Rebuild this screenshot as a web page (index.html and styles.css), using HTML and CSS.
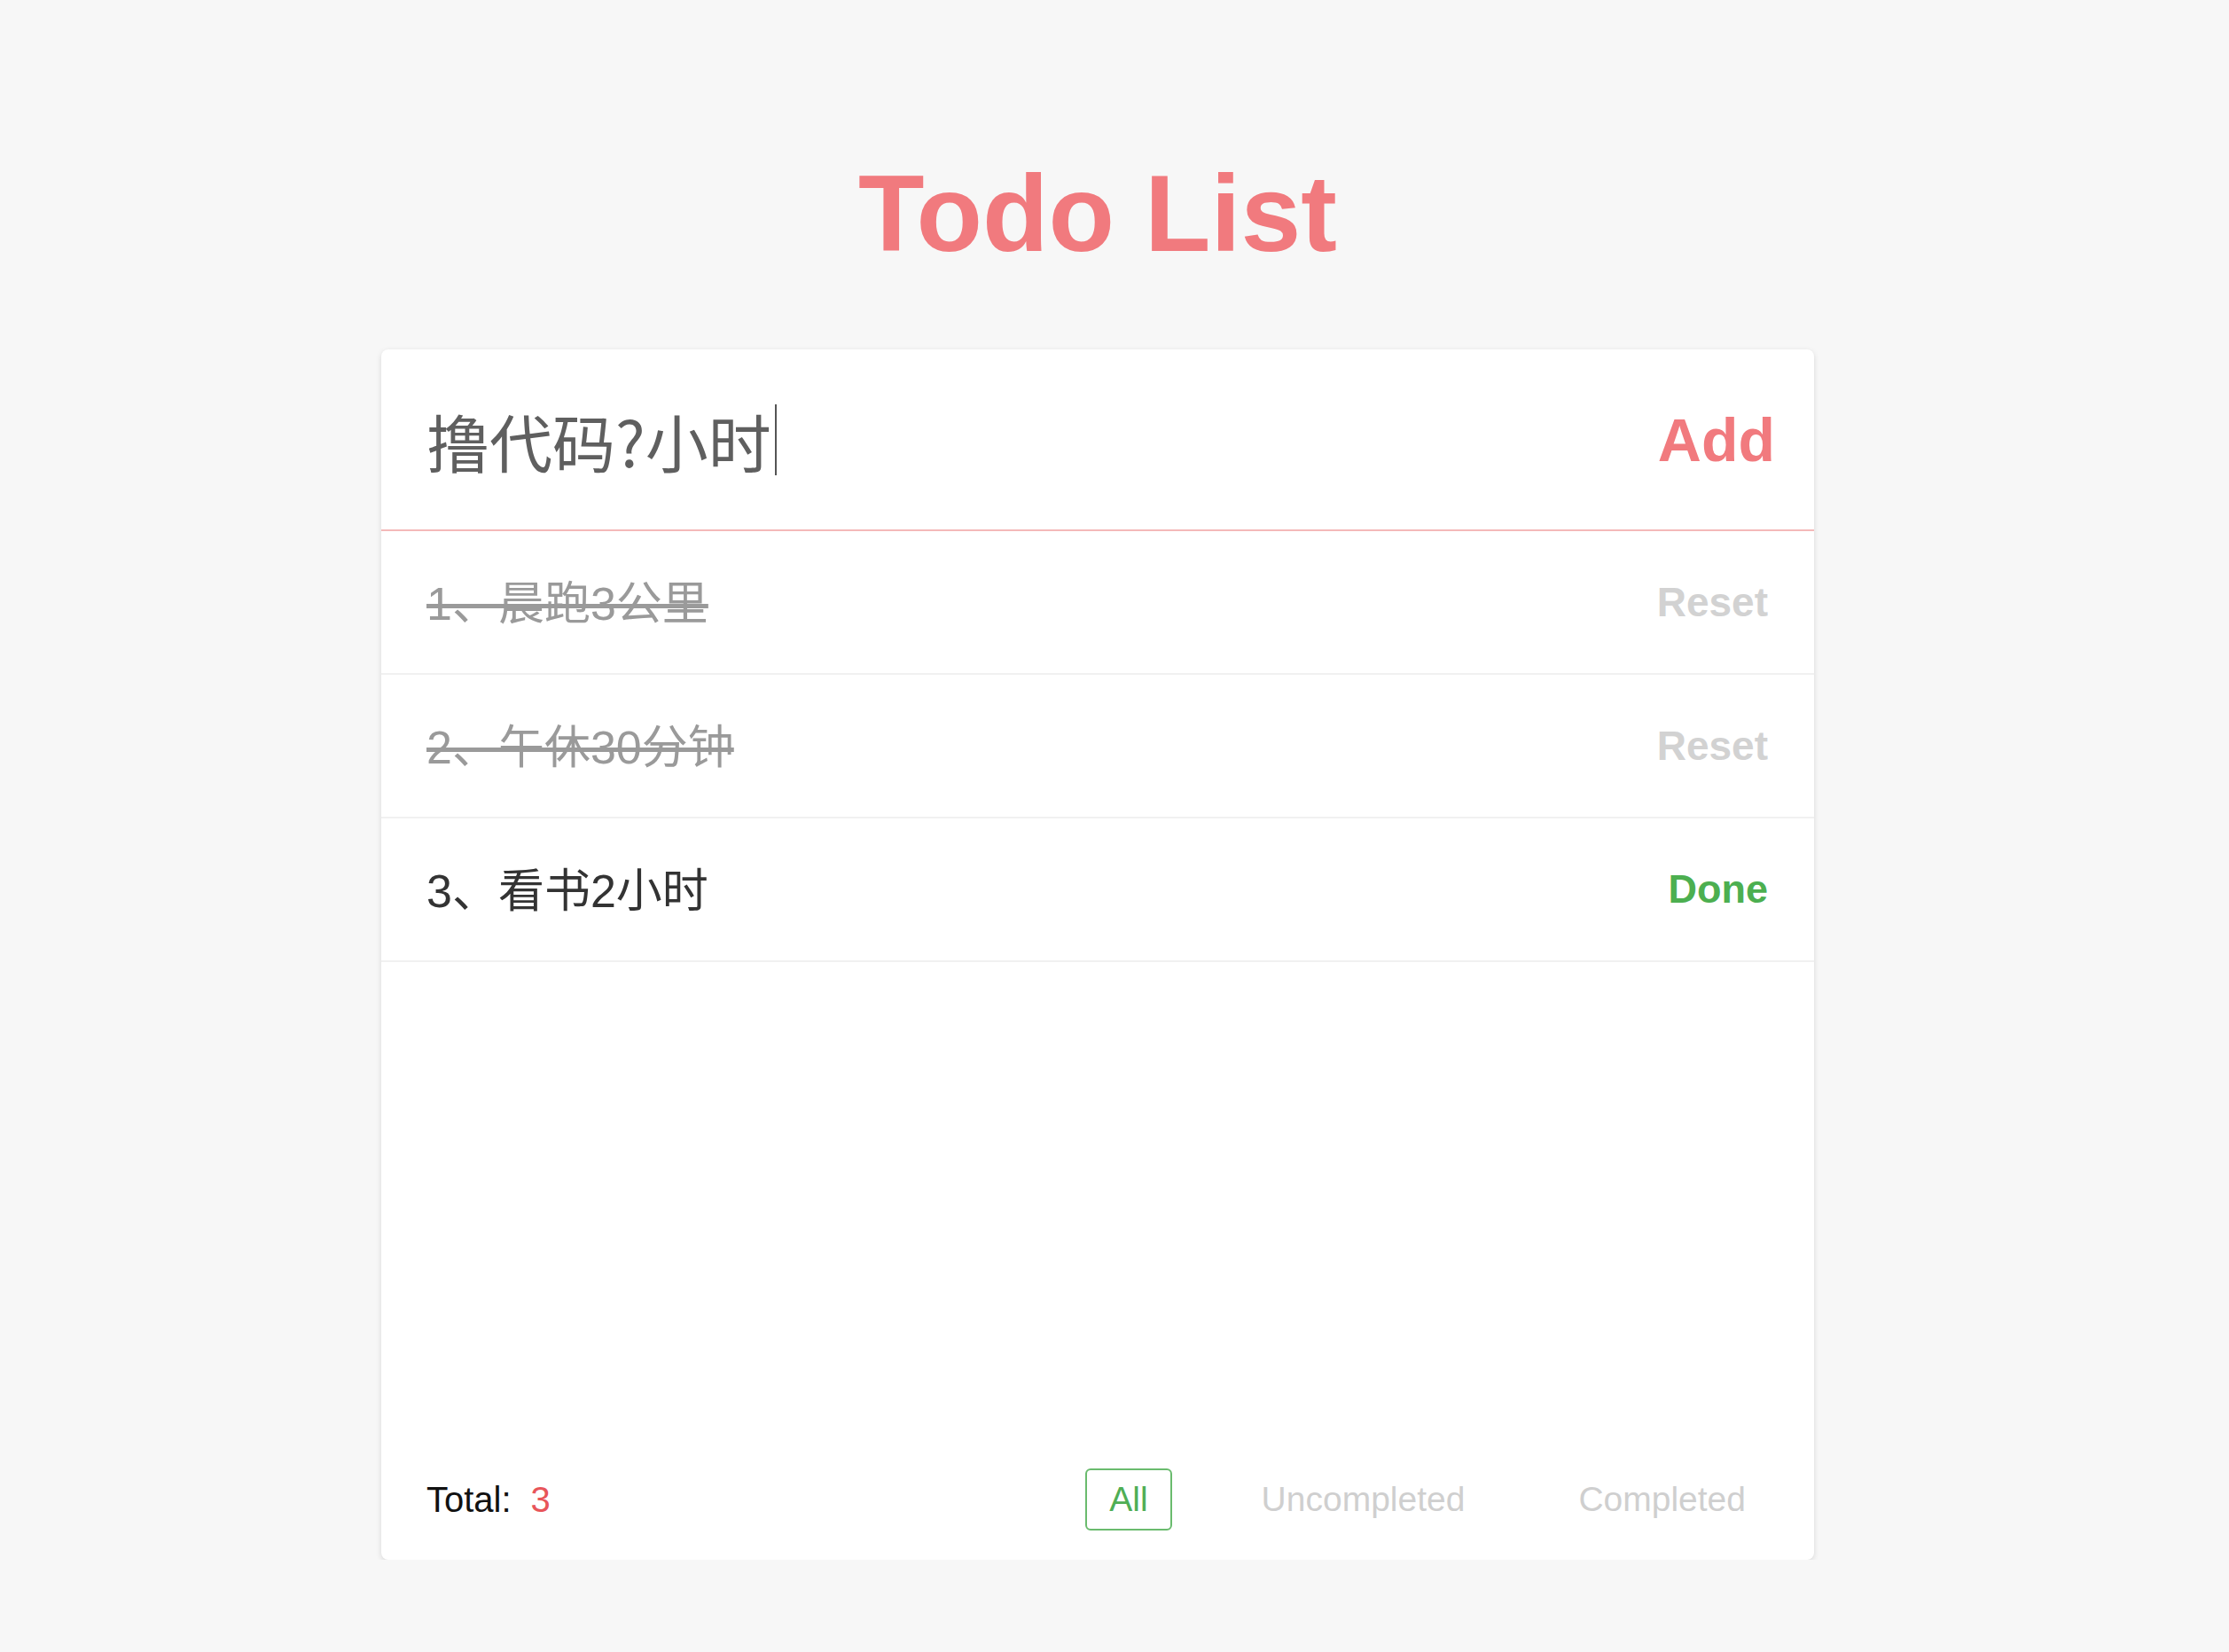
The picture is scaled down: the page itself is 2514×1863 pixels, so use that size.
FILE: index.html
```html
<!DOCTYPE html>
<html lang="zh">
<head>
<meta charset="utf-8">
<title>Todo List</title>
<link rel="stylesheet" href="styles.css">
</head>
<body>
<div class="page">
  <h1 class="title">Todo List</h1>
  <div class="card">
    <div class="entry">
      <div class="entry-text">撸代码?小时<span class="caret"></span></div>
      <button class="add">Add</button>
    </div>
    <ul class="list">
      <li class="item done">
        <span class="item-text">1、晨跑3公里</span>
        <button class="action reset">Reset</button>
      </li>
      <li class="item done">
        <span class="item-text">2、午休30分钟</span>
        <button class="action reset">Reset</button>
      </li>
      <li class="item">
        <span class="item-text">3、看书2小时</span>
        <button class="action complete">Done</button>
      </li>
    </ul>
    <div class="footer">
      <div class="total">Total:<span class="count">3</span></div>
      <div class="filters">
        <button class="filter active">All</button>
        <button class="filter">Uncompleted</button>
        <button class="filter">Completed</button>
      </div>
    </div>
  </div>
</div>
</body>
</html>
```

FILE: styles.css
```css
html, body {
  margin: 0;
  padding: 0;
  background: #f7f7f7;
}

body {
  font-family: "Liberation Sans", "Noto Sans CJK SC", sans-serif;
}

.page {
  padding: 180px 38px 0 0;
}

.title {
  margin: 0 0 92px;
  text-align: center;
  font-size: 122px;
  line-height: 1;
  font-weight: bold;
  color: #f17a7e;
}

.card {
  width: 1616px;
  height: 1365px;
  margin: 0 auto;
  background: #fff;
  border-radius: 8px;
  box-shadow: 0 2px 6px rgba(0, 0, 0, 0.13);
  display: flex;
  flex-direction: column;
  box-sizing: border-box;
}

button {
  border: none;
  background: none;
  padding: 0;
  font-family: "Liberation Sans", "Noto Sans CJK SC", sans-serif;
  cursor: pointer;
}

.entry {
  height: 205px;
  box-sizing: border-box;
  border-bottom: 2px solid #f4b9b9;
  display: flex;
  align-items: center;
  padding: 0 44px 0 51px;
}

.entry-text {
  flex: 1;
  display: flex;
  align-items: center;
  font-family: "Noto Sans CJK SC", sans-serif;
  font-size: 71px;
  color: #5f5f5f;
}

.caret {
  display: inline-block;
  width: 2px;
  height: 80px;
  margin-left: 4px;
  background: #555;
}

.add {
  font-size: 68px;
  font-weight: bold;
  color: #f17a7e;
}

.list {
  list-style: none;
  margin: 0;
  padding: 0;
  flex: 1;
}

.item {
  height: 162px;
  box-sizing: border-box;
  border-bottom: 2px solid #f1f1f1;
  display: flex;
  align-items: center;
  padding: 0 52px 0 51px;
}

.item-text {
  flex: 1;
  padding-bottom: 6px;
  font-size: 52px;
  color: #333;
  font-family: "Liberation Sans", "Noto Sans CJK SC", sans-serif;
}

.done .item-text {
  color: #9a9a9a;
  text-decoration: line-through;
}

.action {
  font-size: 46px;
  font-weight: bold;
}

.reset {
  color: #d2d2d2;
}

.complete {
  color: #4caf50;
  font-size: 45px;
}

.footer {
  height: 136px;
  display: flex;
  align-items: center;
  padding: 0 50px 0 51px;
}

.total {
  flex: 1;
  font-size: 40px;
  color: #111;
}

.count {
  margin-left: 22px;
  color: #e8555a;
}

.filters {
  display: flex;
  align-items: center;
  gap: 74px;
}

.filter {
  font-size: 39px;
  color: #cfcfcf;
  height: 70px;
  padding: 0 25px;
  border: 2px solid transparent;
  border-radius: 6px;
  box-sizing: border-box;
}

.filter.active {
  color: #4fae55;
  border-color: #6abb6e;
}
```
